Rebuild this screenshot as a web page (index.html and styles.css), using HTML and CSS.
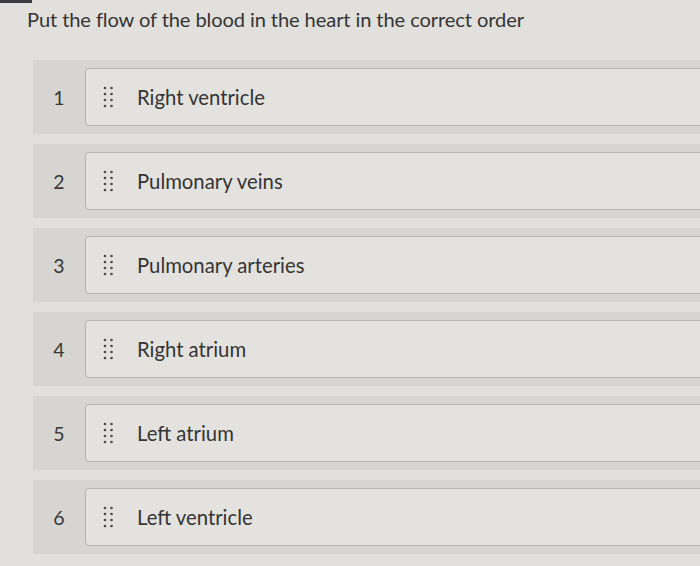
FILE: index.html
```html
<!DOCTYPE html>
<html>
<head>
<meta charset="utf-8">
<link rel="stylesheet" href="styles.css">
</head>
<body>
<div class="topbar"></div>
<h1 class="title">Put the flow of the blood in the heart in the correct order</h1>
<ol class="list">
  <li class="row"><span class="num">1</span><div class="card"><svg class="grip" width="10" height="22" viewBox="0 0 10 22"><g fill="#4a4a4a"><circle cx="2" cy="2" r="1.3"/><circle cx="8.5" cy="2" r="1.3"/><circle cx="2" cy="8" r="1.3"/><circle cx="8.5" cy="8" r="1.3"/><circle cx="2" cy="14" r="1.3"/><circle cx="8.5" cy="14" r="1.3"/><circle cx="2" cy="20" r="1.3"/><circle cx="8.5" cy="20" r="1.3"/></g></svg><span class="label">Right ventricle</span></div></li>
  <li class="row"><span class="num">2</span><div class="card"><svg class="grip" width="10" height="22" viewBox="0 0 10 22"><g fill="#4a4a4a"><circle cx="2" cy="2" r="1.3"/><circle cx="8.5" cy="2" r="1.3"/><circle cx="2" cy="8" r="1.3"/><circle cx="8.5" cy="8" r="1.3"/><circle cx="2" cy="14" r="1.3"/><circle cx="8.5" cy="14" r="1.3"/><circle cx="2" cy="20" r="1.3"/><circle cx="8.5" cy="20" r="1.3"/></g></svg><span class="label">Pulmonary veins</span></div></li>
  <li class="row"><span class="num">3</span><div class="card"><svg class="grip" width="10" height="22" viewBox="0 0 10 22"><g fill="#4a4a4a"><circle cx="2" cy="2" r="1.3"/><circle cx="8.5" cy="2" r="1.3"/><circle cx="2" cy="8" r="1.3"/><circle cx="8.5" cy="8" r="1.3"/><circle cx="2" cy="14" r="1.3"/><circle cx="8.5" cy="14" r="1.3"/><circle cx="2" cy="20" r="1.3"/><circle cx="8.5" cy="20" r="1.3"/></g></svg><span class="label">Pulmonary arteries</span></div></li>
  <li class="row"><span class="num">4</span><div class="card"><svg class="grip" width="10" height="22" viewBox="0 0 10 22"><g fill="#4a4a4a"><circle cx="2" cy="2" r="1.3"/><circle cx="8.5" cy="2" r="1.3"/><circle cx="2" cy="8" r="1.3"/><circle cx="8.5" cy="8" r="1.3"/><circle cx="2" cy="14" r="1.3"/><circle cx="8.5" cy="14" r="1.3"/><circle cx="2" cy="20" r="1.3"/><circle cx="8.5" cy="20" r="1.3"/></g></svg><span class="label">Right atrium</span></div></li>
  <li class="row"><span class="num">5</span><div class="card"><svg class="grip" width="10" height="22" viewBox="0 0 10 22"><g fill="#4a4a4a"><circle cx="2" cy="2" r="1.3"/><circle cx="8.5" cy="2" r="1.3"/><circle cx="2" cy="8" r="1.3"/><circle cx="8.5" cy="8" r="1.3"/><circle cx="2" cy="14" r="1.3"/><circle cx="8.5" cy="14" r="1.3"/><circle cx="2" cy="20" r="1.3"/><circle cx="8.5" cy="20" r="1.3"/></g></svg><span class="label">Left atrium</span></div></li>
  <li class="row"><span class="num">6</span><div class="card"><svg class="grip" width="10" height="22" viewBox="0 0 10 22"><g fill="#4a4a4a"><circle cx="2" cy="2" r="1.3"/><circle cx="8.5" cy="2" r="1.3"/><circle cx="2" cy="8" r="1.3"/><circle cx="8.5" cy="8" r="1.3"/><circle cx="2" cy="14" r="1.3"/><circle cx="8.5" cy="14" r="1.3"/><circle cx="2" cy="20" r="1.3"/><circle cx="8.5" cy="20" r="1.3"/></g></svg><span class="label">Left ventricle</span></div></li>
</ol>
</body>
</html>
```
FILE: styles.css
```css
html, body {
  margin: 0;
  padding: 0;
  background: #e1e0dd;
  overflow: hidden;
  font-family: Lato, "Liberation Sans", sans-serif;
  color: #353434;
}
.topbar {
  width: 32px;
  height: 3px;
  background: #3a3b45;
}
.title {
  margin: 3px 0 0 27px;
  font-size: 20.1px;
  font-weight: 400;
  line-height: 26px;
  letter-spacing: -0.1px;
}
.list {
  list-style: none;
  margin: 28px 0 0 33px;
  padding: 0;
  display: flex;
  flex-direction: column;
  gap: 10px;
}
.row {
  display: flex;
  align-items: center;
  background: #d6d5d2;
  padding: 8px 0;
}
.num {
  width: 52px;
  text-align: center;
  font-size: 19.5px;
  color: #383838;
}
.card {
  flex: 1;
  height: 56px;
  margin-right: -10px;
  display: flex;
  align-items: center;
  background: #e3e2df;
  border: 1px solid #b4b3b0;
  border-radius: 4px;
}
.grip {
  margin-left: 17px;
  margin-right: 24px;
}
.label {
  font-size: 20.3px;
  color: #353434;
}
```
